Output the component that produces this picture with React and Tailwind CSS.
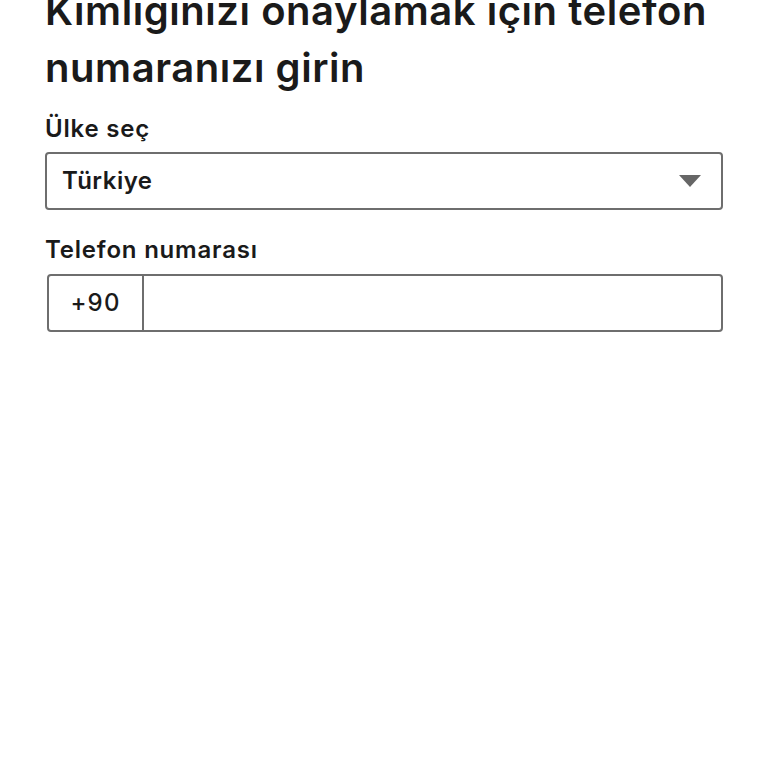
export default function App() {
  return (
    <div
      className="w-[768px] h-[768px] overflow-hidden bg-white text-[#1a1a1a]"
      style={{ fontFamily: "Inter, 'Noto Sans', sans-serif" }}
    >
      <div className="px-[45px] mt-[-18px] flex flex-col">
        <h1 className="text-[40px] leading-[57px] font-semibold tracking-[0.55px]">
          Kimliginizi onaylamak için telefon numaranızı girin
        </h1>

        <label className="mt-[17px] text-[24px] leading-[32px] font-semibold tracking-[0.8px]">
          Ülke seç
        </label>
        <div className="mt-[7px] h-[58px] flex items-center justify-between border-2 border-[#6e6e6e] rounded-[4px] pl-[15px] pr-[20px]">
          <span className="text-[24px] font-semibold tracking-[0.5px]">Türkiye</span>
          <svg width="22" height="12" viewBox="0 0 22 12">
            <path d="M0 0 L22 0 L11 12 Z" fill="#666666" />
          </svg>
        </div>

        <label className="mt-[24px] text-[24px] leading-[32px] font-semibold tracking-[0.8px]">
          Telefon numarası
        </label>
        <div className="mt-[8px] ml-[2px] h-[58px] flex border-2 border-[#6e6e6e] rounded-[4px]">
          <div className="w-[95px] flex items-center justify-center border-r-2 border-[#6e6e6e] text-[24px] font-medium tracking-[1.2px]">
            +90
          </div>
          <input className="flex-1 outline-none px-3 text-[24px]" type="tel" />
        </div>
      </div>
    </div>
  );
}
